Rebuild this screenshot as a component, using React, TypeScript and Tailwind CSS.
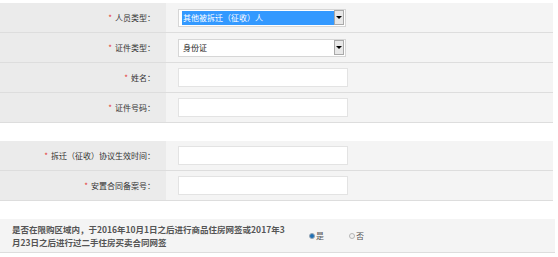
import React from "react";

const font = { fontFamily: '"Noto Sans CJK SC", "Noto Sans", sans-serif' };

function Label({ text }: { text: string }) {
  return (
    <div className="w-[166px] shrink-0 bg-[#ebebeb] flex items-center justify-end pr-[11px] text-[8px] text-[#333]">
      <span className="text-[#e53935] mr-[3px]">*</span>
      <span>{text}：</span>
    </div>
  );
}

function Select({ value, active }: { value: string; active?: boolean }) {
  return (
    <div className="ml-[12px] w-[168px] h-[18px] bg-white border border-[#d6d6d6] flex items-center pl-[3px] pr-[1px]">
      <div
        className={
          active
            ? "flex-1 h-[14px] bg-[#3399ff] text-white text-[8px] flex items-center pl-[1px]"
            : "flex-1 h-[14px] text-[#222] text-[8px] flex items-center pl-[1px]"
        }
      >
        {value}
      </div>
      <div className="w-[10px] h-[15px] bg-[#e8e8e8] border border-[#a9a9a9] flex items-center justify-center">
        <div className="w-0 h-0 border-l-[3px] border-r-[3px] border-t-[3px] border-l-transparent border-r-transparent border-t-black" />
      </div>
    </div>
  );
}

function Input() {
  return <div className="ml-[12px] w-[170px] h-[19px] bg-white border border-[#e3e3e3]" />;
}

function Row({ label, children }: { label: string; children: React.ReactNode }) {
  return (
    <div className="flex h-[30px] border-b border-[#dddddd]">
      <Label text={label} />
      <div className="flex-1 bg-[#f4f4f4] flex items-center">{children}</div>
    </div>
  );
}

export default function App() {
  return (
    <div className="w-[558px] h-[257px] bg-white pt-[3px]" style={font}>
      <div className="w-[553px]">
        <Row label="人员类型">
          <Select value="其他被拆迁（征收）人" active />
        </Row>
        <Row label="证件类型">
          <Select value="身份证" />
        </Row>
        <Row label="姓名">
          <Input />
        </Row>
        <Row label="证件号码">
          <Input />
        </Row>
      </div>

      <div className="w-[553px] mt-[18px]">
        <Row label="拆迁（征收）协议生效时间">
          <Input />
        </Row>
        <Row label="安置合同备案号">
          <Input />
        </Row>
      </div>

      <div className="w-[555px] mt-[18px] h-[34px] bg-[#f4f4f4] border-b border-[#dddddd] flex items-center">
        <p className="ml-[12px] w-[276px] text-[8.5px] leading-[13px] font-bold text-[#555]">
          是否在限购区域内，于2016年10月1日之后进行商品住房网签或2017年3月23日之后进行过二手住房买卖合同网签
        </p>
        <div className="ml-[21px] flex items-center gap-[25px] text-[8px] text-[#555]">
          <label className="flex items-center gap-[1px]">
            <span className="w-[6px] h-[6px] rounded-full border border-[#9aa7b4] bg-[#1f6fb5]" />
            是
          </label>
          <label className="flex items-center gap-[1px]">
            <span className="w-[6px] h-[6px] rounded-full border border-[#b5b5b5] bg-[#f0f0f0]" />
            否
          </label>
        </div>
      </div>
    </div>
  );
}
